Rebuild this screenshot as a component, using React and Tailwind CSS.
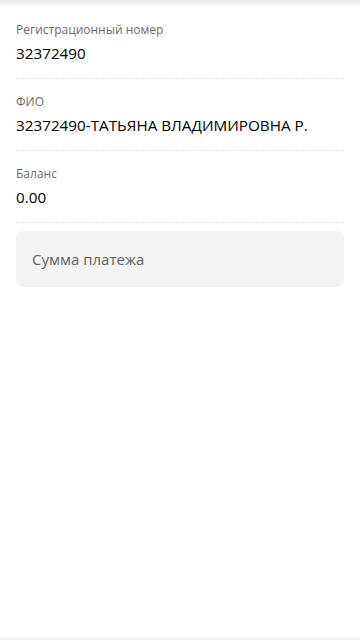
import React, { useState } from 'react';

const fields = [
    { label: 'Регистрационный номер', value: '32372490' },
    { label: 'ФИО', value: '32372490-ТАТЬЯНА ВЛАДИМИРОВНА Р.' },
    { label: 'Баланс', value: '0.00' },
];

const App = () => {
    const [amount, setAmount] = useState('');

    return (
        <div className="relative flex min-h-[640px] flex-col bg-white" style={{ fontFamily: '"Open Sans", "Noto Sans", sans-serif' }}>
            {/* тень от шапки */}
            <div className="h-[7px] bg-gradient-to-b from-[#e9e9e9] to-white"></div>

            <div className="px-4">
                {fields.map((f) => (
                    <div key={f.label} className="border-b border-dashed border-[#e3e3e3] pt-[15px] pb-[14px]">
                        <div className="text-[12px] leading-[16px] text-[#6b6b6b]">{f.label}</div>
                        <div className="mt-1 text-[15.25px] leading-[22px] text-black">{f.value}</div>
                    </div>
                ))}

                <input
                    type="text"
                    value={amount}
                    onChange={(e) => setAmount(e.target.value)}
                    placeholder="Сумма платежа"
                    className="mt-[8px] h-[56px] w-full rounded-lg bg-[#f4f4f4] px-4 text-[15px] text-black outline-none placeholder:text-[#5f5f5f]"
                />
            </div>

            <div className="flex-1"></div>
            <div className="h-[5px] bg-gradient-to-b from-white to-[#f0f0f0]"></div>
        </div>
    );
};

export default App;
